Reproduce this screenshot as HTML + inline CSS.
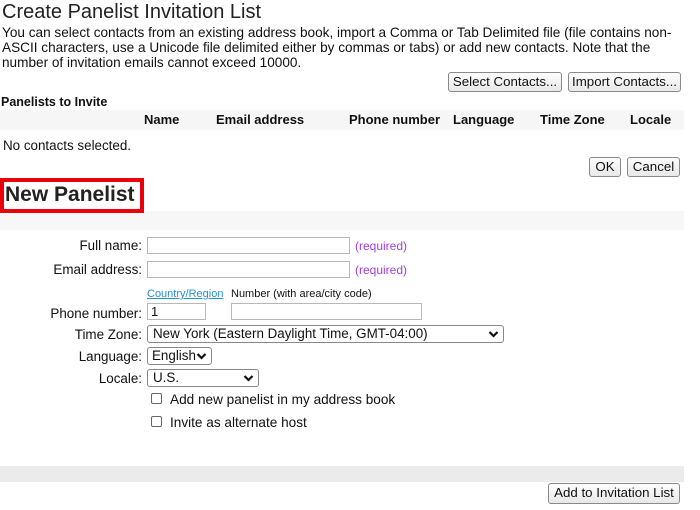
<!DOCTYPE html>
<html><head><style>
*{margin:0;padding:0;box-sizing:border-box}
body{width:700px;height:510px;background:#fff;font-family:"Liberation Sans",Arial,sans-serif;color:#111;position:relative;overflow:hidden}
.a{position:absolute;white-space:nowrap}
.btn{position:absolute;border:1px solid #8a8a8a;border-radius:3px;background:linear-gradient(#fdfdfd,#e8e8e8);font-size:13.3px;text-align:center;line-height:18px;color:#111}
.inp{position:absolute;border:1px solid #b8b8b8;height:17px;background:#fff;font-size:13px;line-height:15px;padding-left:3px}
.sel{position:absolute;border:1px solid #888;border-radius:3px;height:18px;background:#fff;font-size:13.4px;line-height:16px;padding-left:5px}
.sel svg{position:absolute;right:4px;top:4px}
.lbl{position:absolute;right:558px;font-size:13.4px;white-space:nowrap}
.req{position:absolute;left:355px;font-size:12px;color:#a040e0}
.cb{position:absolute;left:151px;width:11px;height:11px;border:1px solid #666;border-radius:2px;background:#fff}
</style></head><body>
<div class="a" style="left:2px;top:1px;font-size:20px;color:#222">Create Panelist Invitation List</div>
<div class="a" style="left:2px;top:25px;font-size:13.6px;line-height:15px;color:#111">You can select contacts from an existing address book, import a Comma or Tab Delimited file (file contains non-<br>ASCII characters, use a Unicode file delimited either by commas or tabs) or add new contacts. Note that the<br>number of invitation emails cannot exceed 10000.</div>
<div class="btn" style="left:448px;top:72px;width:114px;height:20px">Select Contacts...</div>
<div class="btn" style="left:568px;top:72px;width:113px;height:20px">Import Contacts...</div>
<div class="a" style="left:1px;top:95px;font-size:12.5px;font-weight:bold">Panelists to Invite</div>
<div class="a" style="left:0;top:110px;width:684px;height:20px;background:#f6f6f6"></div>
<div class="a" style="left:144px;top:112px;font-size:13px;font-weight:bold">Name</div>
<div class="a" style="left:216px;top:112px;font-size:13px;font-weight:bold">Email address</div>
<div class="a" style="left:349px;top:112px;font-size:13px;font-weight:bold">Phone number</div>
<div class="a" style="left:453px;top:112px;font-size:13px;font-weight:bold">Language</div>
<div class="a" style="left:540px;top:112px;font-size:13px;font-weight:bold">Time Zone</div>
<div class="a" style="left:630px;top:112px;font-size:13px;font-weight:bold">Locale</div>
<div class="a" style="left:3px;top:138px;font-size:13.4px">No contacts selected.</div>
<div class="btn" style="left:589px;top:157px;width:32px;height:20px">OK</div>
<div class="btn" style="left:627px;top:157px;width:53px;height:20px">Cancel</div>
<div class="a" style="left:0;top:211px;width:684px;height:19px;background:#f7f7f7"></div>
<div class="a" style="left:0;top:178px;width:144px;height:35px;border:4px solid #e8000b;background:#fff"></div>
<div class="a" style="left:5px;top:183px;font-size:21px;font-weight:bold;color:#222">New Panelist</div>

<div class="lbl" style="top:238px">Full name:</div>
<div class="inp" style="left:147px;top:237px;width:203px"></div>
<div class="req" style="top:239px">(required)</div>
<div class="lbl" style="top:262px">Email address:</div>
<div class="inp" style="left:147px;top:261px;width:203px"></div>
<div class="req" style="top:263px">(required)</div>
<div class="a" style="left:147px;top:288px;font-size:11px;color:#2a8fd0;text-decoration:underline">Country/Region</div>
<div class="a" style="left:231px;top:288px;font-size:11px">Number (with area/city code)</div>
<div class="lbl" style="top:306px">Phone number:</div>
<div class="inp" style="left:147px;top:303px;width:59px">1</div>
<div class="inp" style="left:231px;top:303px;width:191px"></div>
<div class="lbl" style="top:327px">Time Zone:</div>
<div class="sel" style="left:147px;top:325px;width:357px">New York (Eastern Daylight Time, GMT-04:00)<svg width="11" height="9" viewBox="0 0 11 9"><path d="M1.5 2 L5.5 6 L9.5 2" fill="none" stroke="#111" stroke-width="2.2"/></svg></div>
<div class="lbl" style="top:349px">Language:</div>
<div class="sel" style="left:147px;top:347px;width:65px;padding-left:4px">English<svg width="11" height="9" viewBox="0 0 11 9"><path d="M1.5 2 L5.5 6 L9.5 2" fill="none" stroke="#111" stroke-width="2.2"/></svg></div>
<div class="lbl" style="top:371px">Locale:</div>
<div class="sel" style="left:147px;top:369px;width:112px">U.S.<svg width="11" height="9" viewBox="0 0 11 9"><path d="M1.5 2 L5.5 6 L9.5 2" fill="none" stroke="#111" stroke-width="2.2"/></svg></div>
<div class="cb" style="top:393px"></div>
<div class="a" style="left:170px;top:392px;font-size:13.6px">Add new panelist in my address book</div>
<div class="cb" style="top:416px"></div>
<div class="a" style="left:170px;top:415px;font-size:13.6px">Invite as alternate host</div>
<div class="a" style="left:0;top:466px;width:684px;height:16px;background:#ebebeb"></div>
<div class="btn" style="left:548px;top:483px;width:132px;height:21px">Add to Invitation List</div>
</body></html>
